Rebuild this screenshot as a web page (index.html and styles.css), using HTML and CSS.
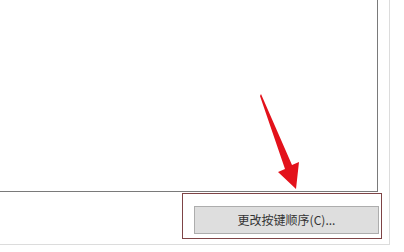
FILE: index.html
```html
<!DOCTYPE html>
<html lang="zh-CN">
<head>
    <meta charset="UTF-8">
    <title>更改按键顺序</title>
    <link rel="stylesheet" href="styles.css">
</head>
<body>
    <div class="dialog">
        <div class="listbox"></div>
        <div class="footer">
            <div class="highlight">
                <button class="btn">更改按键顺序(C)...</button>
            </div>
        </div>
    </div>

    <svg class="arrow" width="404" height="252" viewBox="0 0 404 252">
        <polygon points="261,94 292,165 299,162 296,189 278,172 285,169 260,96" fill="#e3121b"/>
    </svg>
</body>
</html>
```

FILE: styles.css
```css
body {
    margin: 0;
    background: #fff;
    font-family: "Noto Sans CJK SC", "Liberation Sans", sans-serif;
    position: relative;
    width: 404px;
    height: 252px;
    overflow: hidden;
}
.dialog {
    width: 389px;
    height: 244px;
    border-right: 1px solid #dcdcdc;
    border-bottom: 1px solid #dcdcdc;
}
.listbox {
    width: 377px;
    height: 191px;
    border-right: 1px solid #7a7a7a;
    border-bottom: 1px solid #7a7a7a;
}
.footer {
    padding-top: 1px;
}
.highlight {
    margin-left: 182px;
    width: 200px;
    height: 46px;
    border: 1px solid #7e4446;
    padding: 12px 0 0 11px;
    box-sizing: border-box;
}
.btn {
    display: block;
    width: 185px;
    height: 28px;
    background: #dedede;
    border: 1px solid #adadad;
    color: #333;
    font-family: inherit;
    font-size: 12px;
    padding: 0;
    line-height: 26px;
}
.arrow {
    position: absolute;
    left: 0;
    top: 0;
}
```
